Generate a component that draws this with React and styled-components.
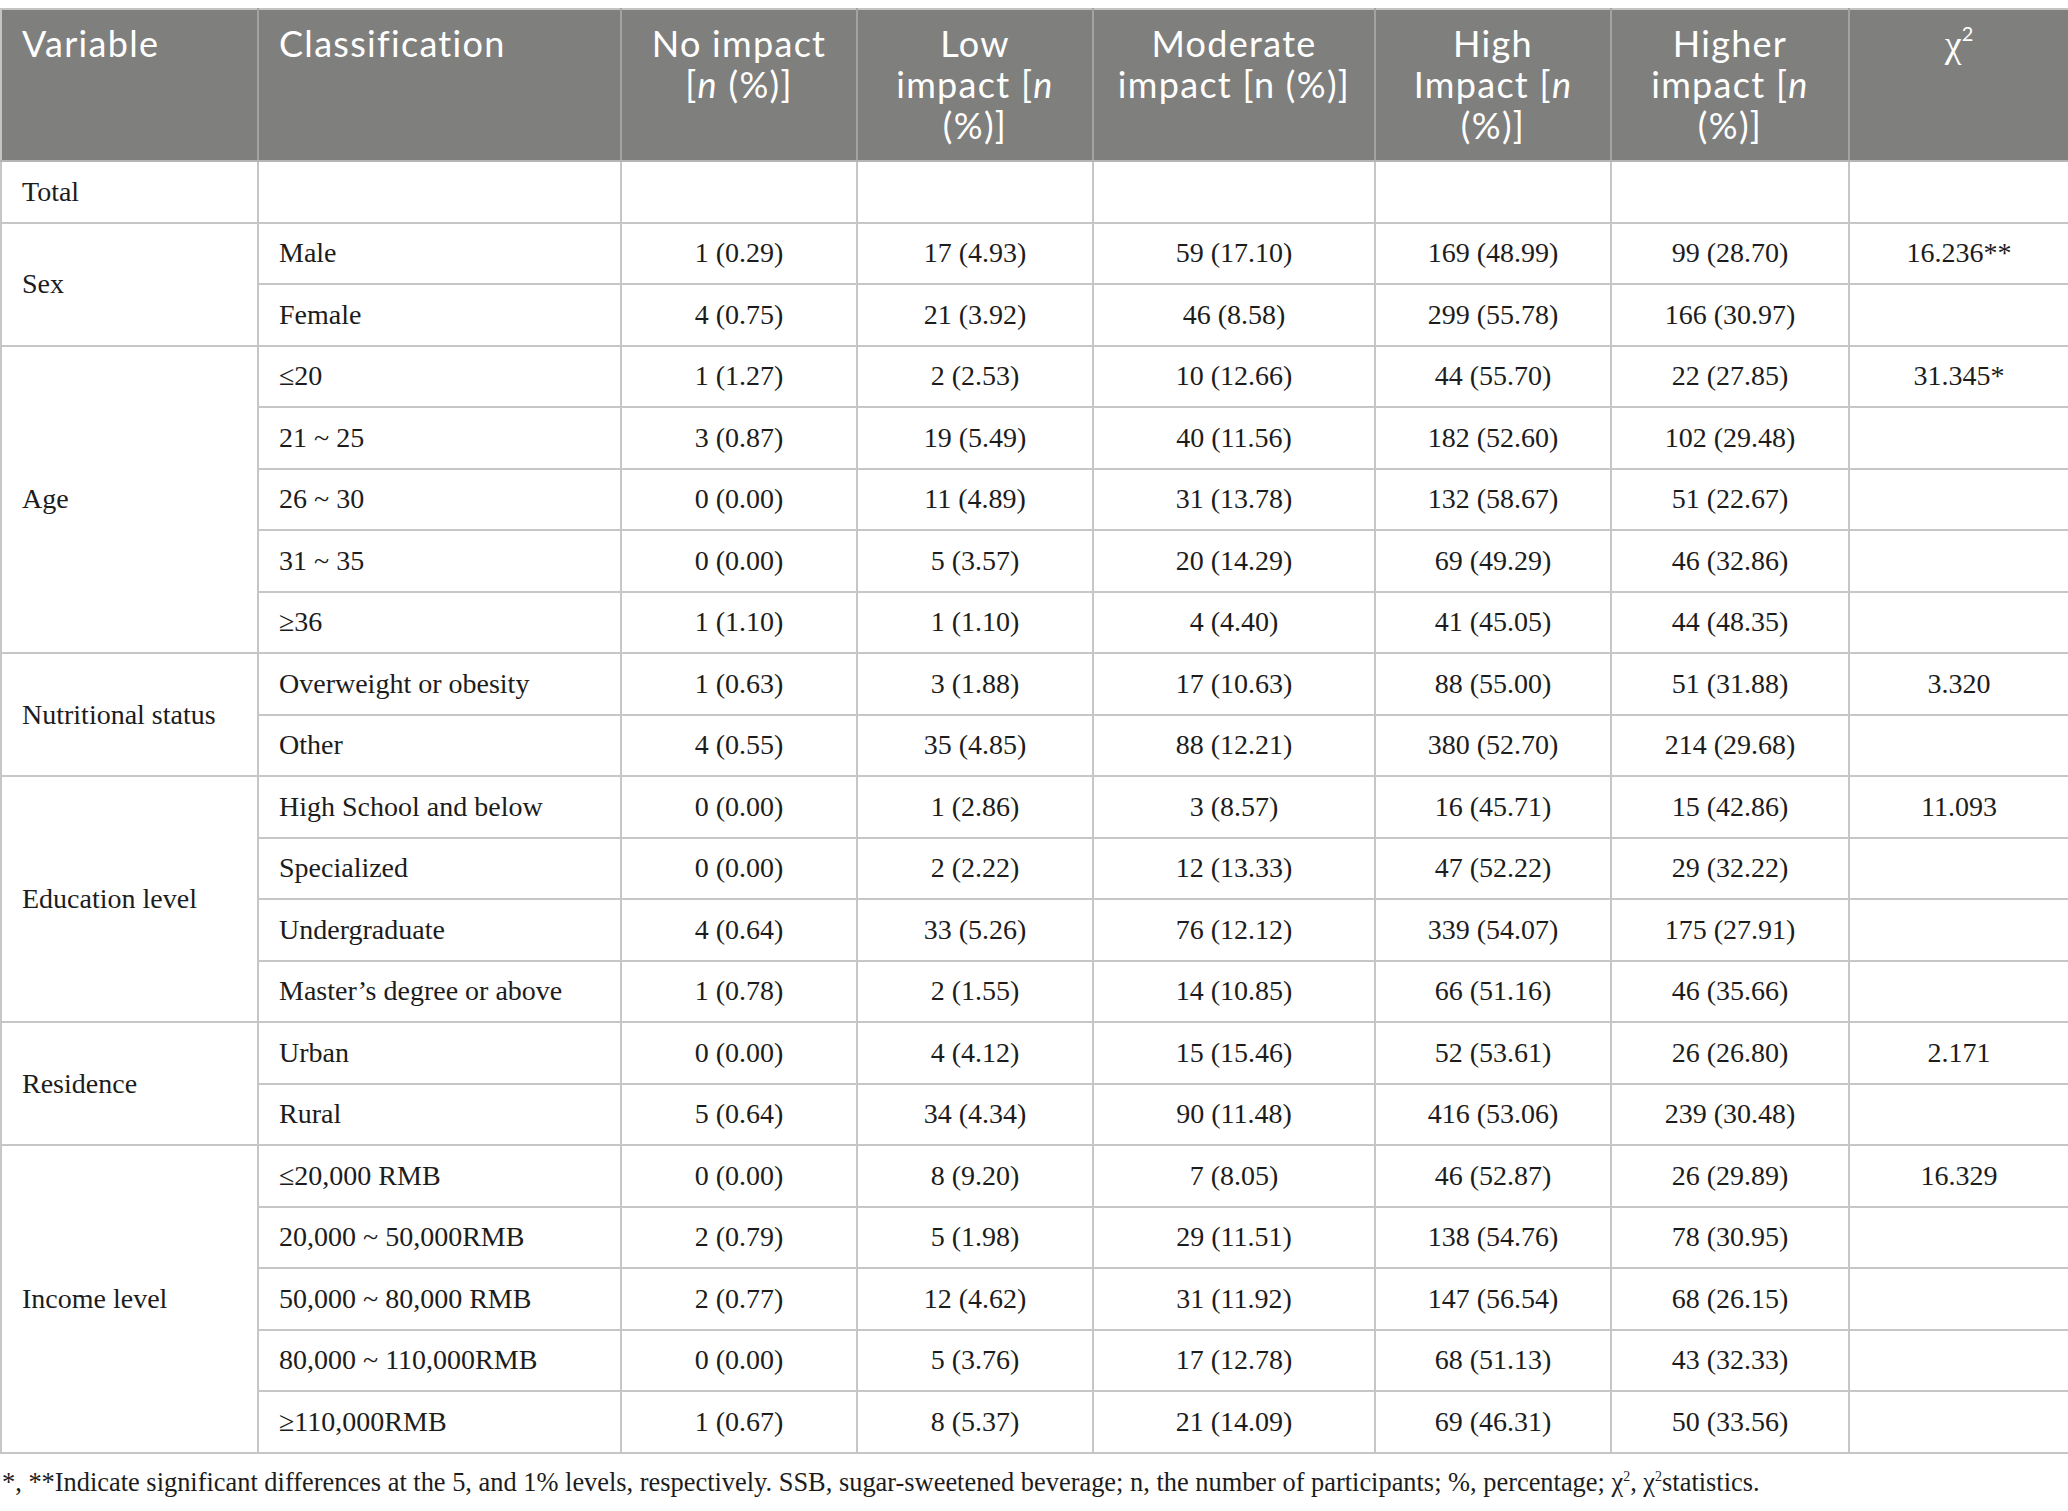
import styled, { createGlobalStyle } from 'styled-components';

const GlobalStyle = createGlobalStyle`
  body {
    margin: 0;
    background: #ffffff;
  }
`;

const groups = [
  { variable: 'Total', rows: [['', '', '', '', '', '', '']] },
  {
    variable: 'Sex',
    rows: [
      ['Male', '1 (0.29)', '17 (4.93)', '59 (17.10)', '169 (48.99)', '99 (28.70)', '16.236**'],
      ['Female', '4 (0.75)', '21 (3.92)', '46 (8.58)', '299 (55.78)', '166 (30.97)', ''],
    ],
  },
  {
    variable: 'Age',
    rows: [
      ['≤20', '1 (1.27)', '2 (2.53)', '10 (12.66)', '44 (55.70)', '22 (27.85)', '31.345*'],
      ['21 ~ 25', '3 (0.87)', '19 (5.49)', '40 (11.56)', '182 (52.60)', '102 (29.48)', ''],
      ['26 ~ 30', '0 (0.00)', '11 (4.89)', '31 (13.78)', '132 (58.67)', '51 (22.67)', ''],
      ['31 ~ 35', '0 (0.00)', '5 (3.57)', '20 (14.29)', '69 (49.29)', '46 (32.86)', ''],
      ['≥36', '1 (1.10)', '1 (1.10)', '4 (4.40)', '41 (45.05)', '44 (48.35)', ''],
    ],
  },
  {
    variable: 'Nutritional status',
    rows: [
      ['Overweight or obesity', '1 (0.63)', '3 (1.88)', '17 (10.63)', '88 (55.00)', '51 (31.88)', '3.320'],
      ['Other', '4 (0.55)', '35 (4.85)', '88 (12.21)', '380 (52.70)', '214 (29.68)', ''],
    ],
  },
  {
    variable: 'Education level',
    rows: [
      ['High School and below', '0 (0.00)', '1 (2.86)', '3 (8.57)', '16 (45.71)', '15 (42.86)', '11.093'],
      ['Specialized', '0 (0.00)', '2 (2.22)', '12 (13.33)', '47 (52.22)', '29 (32.22)', ''],
      ['Undergraduate', '4 (0.64)', '33 (5.26)', '76 (12.12)', '339 (54.07)', '175 (27.91)', ''],
      ['Master’s degree or above', '1 (0.78)', '2 (1.55)', '14 (10.85)', '66 (51.16)', '46 (35.66)', ''],
    ],
  },
  {
    variable: 'Residence',
    rows: [
      ['Urban', '0 (0.00)', '4 (4.12)', '15 (15.46)', '52 (53.61)', '26 (26.80)', '2.171'],
      ['Rural', '5 (0.64)', '34 (4.34)', '90 (11.48)', '416 (53.06)', '239 (30.48)', ''],
    ],
  },
  {
    variable: 'Income level',
    rows: [
      ['≤20,000 RMB', '0 (0.00)', '8 (9.20)', '7 (8.05)', '46 (52.87)', '26 (29.89)', '16.329'],
      ['20,000 ~ 50,000RMB', '2 (0.79)', '5 (1.98)', '29 (11.51)', '138 (54.76)', '78 (30.95)', ''],
      ['50,000 ~ 80,000 RMB', '2 (0.77)', '12 (4.62)', '31 (11.92)', '147 (56.54)', '68 (26.15)', ''],
      ['80,000 ~ 110,000RMB', '0 (0.00)', '5 (3.76)', '17 (12.78)', '68 (51.13)', '43 (32.33)', ''],
      ['≥110,000RMB', '1 (0.67)', '8 (5.37)', '21 (14.09)', '69 (46.31)', '50 (33.56)', ''],
    ],
  },
];

const widths = [257, 363, 236, 236, 282, 236, 238, 220];

export default function App() {
  return (
    <Page>
      <GlobalStyle />
      <Table>
        <colgroup>
          {widths.map((w, i) => (
            <col key={i} style={{ width: w }} />
          ))}
        </colgroup>
        <thead>
          <HeadRow>
            <Th>Variable</Th>
            <Th>Classification</Th>
            <Th center>No impact<br />[<i>n</i> (%)]</Th>
            <Th center>Low<br />impact [<i>n</i><br />(%)]</Th>
            <Th center>Moderate<br />impact [n (%)]</Th>
            <Th center>High<br />Impact [<i>n</i><br />(%)]</Th>
            <Th center>Higher<br />impact [<i>n</i><br />(%)]</Th>
            <Th center><Chi>χ</Chi><Sup>2</Sup></Th>
          </HeadRow>
        </thead>
        <tbody>
          {groups.map((g) =>
            g.rows.map((r, i) => (
              <Row key={g.variable + i}>
                {i === 0 && <VarCell rowSpan={g.rows.length}>{g.variable}</VarCell>}
                <ClassCell>{r[0]}</ClassCell>
                {r.slice(1).map((v, j) => (
                  <DataCell key={j}>{v}</DataCell>
                ))}
              </Row>
            ))
          )}
        </tbody>
      </Table>
      <Note>
        *, **Indicate significant differences at the 5, and 1% levels, respectively. SSB, sugar-sweetened beverage; n, the number of participants; %, percentage; χ<NoteSup>2</NoteSup>, χ<NoteSup>2</NoteSup>statistics.
      </Note>
    </Page>
  );
}

const Page = styled.div`
  padding-top: 8px;
  width: 2068px;
`;

const Table = styled.table`
  width: 2068px;
  border-collapse: collapse;
  table-layout: fixed;
  border: 2px solid #c4c4c4;
`;

const HeadRow = styled.tr`
  height: 152px;
  background-color: #7f807e;
`;

const Th = styled.th`
  vertical-align: top;
  text-align: ${props => (props.center ? 'center' : 'left')};
  padding: 13px 20px 0 20px;
  font-family: 'Lato', 'Open Sans', sans-serif;
  font-weight: 400;
  font-size: 36px;
  line-height: 41px;
  letter-spacing: 1.3px;
  color: #ffffff;
  white-space: nowrap;
  border: 2px solid #a3a4a2;
  border-top-color: #c4c4c4;
  border-bottom-color: #b5b5b5;

  &:first-child {
    border-left-color: #c4c4c4;
  }
  &:last-child {
    border-right-color: #c4c4c4;
  }

  i {
    font-style: italic;
  }
`;

const Chi = styled.span`
  font-family: 'Liberation Serif', serif;
  font-size: 38px;
  letter-spacing: 0;
`;

const Sup = styled.sup`
  font-size: 20px;
  vertical-align: 16px;
  line-height: 0;
  letter-spacing: 0;
`;

const Row = styled.tr`
  height: 61.5px;
`;

const cellBase = `
  font-family: 'Liberation Serif', 'Times New Roman', serif;
  font-size: 28px;
  color: #1c1c1c;
  border: 2px solid #c6c6c6;
  padding: 0 20px;
  white-space: nowrap;
`;

const VarCell = styled.td`
  ${cellBase}
  text-align: left;
  vertical-align: middle;
`;

const ClassCell = styled.td`
  ${cellBase}
  text-align: left;
  vertical-align: middle;
`;

const DataCell = styled.td`
  ${cellBase}
  text-align: center;
  vertical-align: middle;
`;

const Note = styled.p`
  margin: 12px 0 0 0;
  padding-left: 2px;
  font-family: 'Liberation Serif', 'Times New Roman', serif;
  font-size: 26.4px;
  line-height: 32px;
  color: #1c1c1c;
  white-space: nowrap;
`;

const NoteSup = styled.sup`
  font-size: 14px;
  line-height: 0;
`;
